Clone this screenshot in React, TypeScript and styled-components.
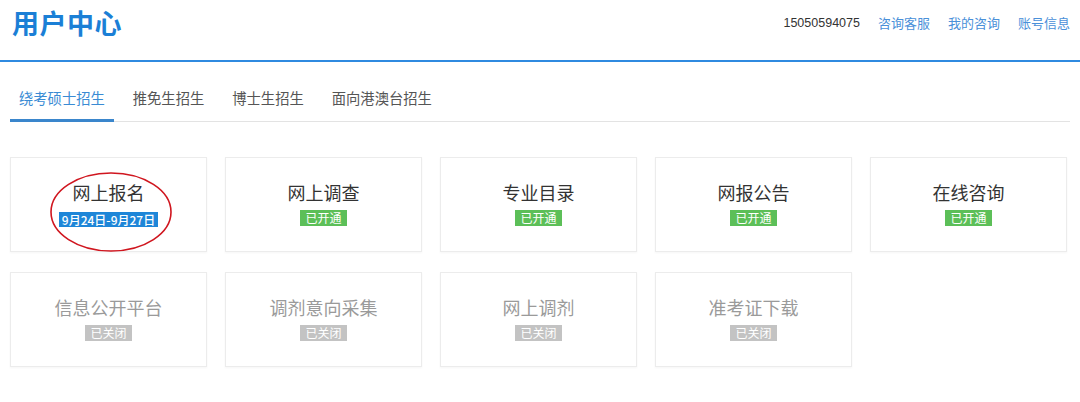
import styled, { createGlobalStyle } from "styled-components"

const GlobalStyle = createGlobalStyle`
    body {
        margin: 0;
        background: #fff;
        font-family: "Liberation Sans", "Noto Sans CJK SC", sans-serif;
    }
`

const Page = styled.div`
    width: 1080px;
    height: 402px;
    overflow: hidden;
    background: #fff;
`

const Header = styled.header`
    display: flex;
    align-items: center;
    justify-content: space-between;
    height: 62px;
    padding: 0 10px 14px 12px;
    box-sizing: border-box;
    border-bottom: 2px solid #2f8ae0;
`

const Logo = styled.h1`
    margin: 0;
    font-family: "Noto Sans CJK SC", sans-serif;
    font-size: 27px;
    font-weight: 700;
    line-height: 32px;
    color: #1b7fd6;
    letter-spacing: 0.5px;
`

const TopLinks = styled.nav`
    display: flex;
    align-items: center;
    gap: 18px;
    font-size: 13px;
    line-height: 18px;
`

const Phone = styled.span`
    color: #333;
    font-family: "Liberation Sans", sans-serif;
    font-size: 12.5px;
`

const TopLink = styled.a`
    color: #4a90d9;
    text-decoration: none;
    font-family: "Noto Sans CJK SC", sans-serif;
`

const Tabs = styled.div`
    display: flex;
    gap: 10px;
    margin: 0 10px;
    padding-top: 26px;
    border-bottom: 1px solid #e3e3e3;
`

const Tab = styled.div<{ $active?: boolean }>`
    padding: 0 9px 11px;
    font-family: "Noto Sans CJK SC", sans-serif;
    font-size: 14.3px;
    line-height: 20px;
    color: ${p => (p.$active ? "#3a8bd4" : "#555")};
    border-bottom: 3px solid ${p => (p.$active ? "#3a86cc" : "transparent")};
    margin-bottom: -1px;
`

const Grid = styled.div`
    display: grid;
    grid-template-columns: repeat(5, 197px);
    grid-auto-rows: 95px;
    column-gap: 18px;
    row-gap: 20px;
    margin-top: 35px;
    padding: 0 10px;
`

const Card = styled.div`
    position: relative;
    display: flex;
    flex-direction: column;
    align-items: center;
    padding-top: 22px;
    box-sizing: border-box;
    border: 1px solid #ececec;
    box-shadow: 0 1px 2px rgba(0, 0, 0, 0.04);
    background: #fff;
`

const CardTitle = styled.div<{ $off?: boolean }>`
    font-family: "Noto Sans CJK SC", sans-serif;
    font-size: 18px;
    line-height: 24px;
    color: ${p => (p.$off ? "#9a9a9a" : "#333")};
`

const badgeColors = {
    open: "#5cbf58",
    closed: "#c3c3c3",
    date: "#1e86d8",
}

const Badge = styled.span<{ $kind: keyof typeof badgeColors }>`
    margin-top: ${p => (p.$kind === "date" ? "8px" : "6px")};
    padding: 0 ${p => (p.$kind === "date" ? "3px" : "5px")};
    font-family: "Noto Sans CJK SC", sans-serif;
    font-size: 12px;
    line-height: ${p => (p.$kind === "date" ? "15px" : "16px")};
    font-weight: ${p => (p.$kind === "date" ? 500 : 400)};
    color: #fff;
    background: ${p => badgeColors[p.$kind]};
`

const Circle = styled.svg`
    position: absolute;
    left: 38px;
    top: 13px;
    width: 124px;
    height: 82px;
    overflow: visible;
    pointer-events: none;
`

const items = [
    { title: "网上报名", badge: "9月24日-9月27日", kind: "date" as const, mark: true },
    { title: "网上调查", badge: "已开通", kind: "open" as const },
    { title: "专业目录", badge: "已开通", kind: "open" as const },
    { title: "网报公告", badge: "已开通", kind: "open" as const },
    { title: "在线咨询", badge: "已开通", kind: "open" as const },
    { title: "信息公开平台", badge: "已关闭", kind: "closed" as const },
    { title: "调剂意向采集", badge: "已关闭", kind: "closed" as const },
    { title: "网上调剂", badge: "已关闭", kind: "closed" as const },
    { title: "准考证下载", badge: "已关闭", kind: "closed" as const },
]

const tabs = ["绕考硕士招生", "推免生招生", "博士生招生", "面向港澳台招生"]

export default function App() {
    return (
        <Page>
            <GlobalStyle />
            <Header>
                <Logo>用户中心</Logo>
                <TopLinks>
                    <Phone>15050594075</Phone>
                    <TopLink>咨询客服</TopLink>
                    <TopLink>我的咨询</TopLink>
                    <TopLink>账号信息</TopLink>
                </TopLinks>
            </Header>
            <Tabs>
                {tabs.map((t, i) => (
                    <Tab key={t} $active={i === 0}>{t}</Tab>
                ))}
            </Tabs>
            <Grid>
                {items.map(item => (
                    <Card key={item.title}>
                        <CardTitle $off={item.kind === "closed"}>{item.title}</CardTitle>
                        <Badge $kind={item.kind}>{item.badge}</Badge>
                        {item.mark && (
                            <Circle viewBox="0 0 124 82">
                                <ellipse cx="62" cy="41" rx="60" ry="39" fill="none" stroke="#d0161f" strokeWidth="1.6" />
                            </Circle>
                        )}
                    </Card>
                ))}
            </Grid>
        </Page>
    )
}
